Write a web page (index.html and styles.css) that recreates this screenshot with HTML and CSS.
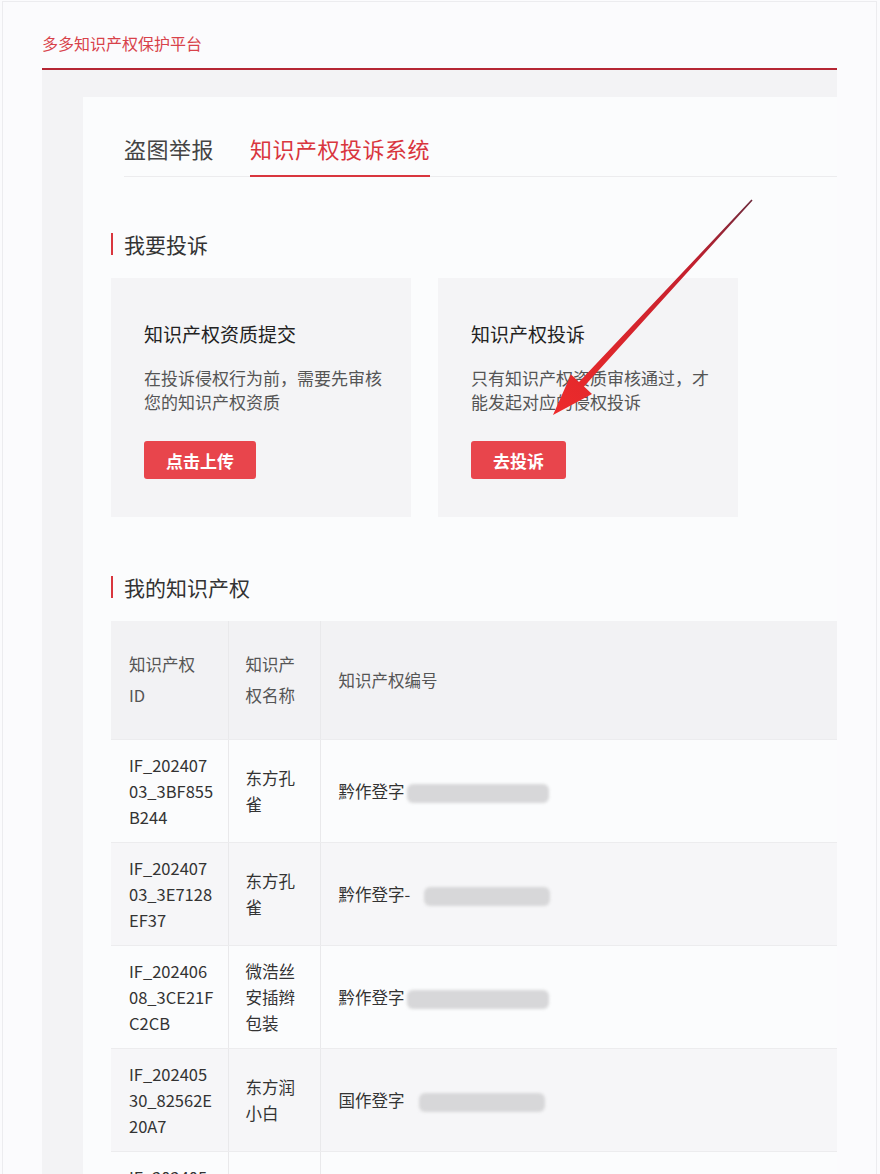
FILE: index.html
```html
<!DOCTYPE html>
<html lang="zh-CN">
<head>
  <meta charset="UTF-8" />
  <meta name="viewport" content="width=device-width, initial-scale=1.0"/>
  <title>多多知识产权保护平台</title>
  <link rel="stylesheet" href="styles.css">
</head>
<body>
  <div class="screen">
    <div class="top">多多知识产权保护平台</div>

    <div class="main">
      <div class="panel">
        <div class="tabs">
          <span class="tab">盗图举报</span>
          <span class="tab active">知识产权投诉系统</span>
        </div>

        <h2 class="sec-title">我要投诉</h2>
        <div class="cards">
          <div class="card">
            <h3>知识产权资质提交</h3>
            <p>在投诉侵权行为前，需要先审核您的知识产权资质</p>
            <button class="btn">点击上传</button>
          </div>
          <div class="card">
            <h3>知识产权投诉</h3>
            <p>只有知识产权资质审核通过，才能发起对应的侵权投诉</p>
            <button class="btn">去投诉</button>
          </div>
        </div>

        <h2 class="sec-title">我的知识产权</h2>
        <table class="ip-table">
          <colgroup>
            <col class="c-id">
            <col class="c-name">
            <col>
          </colgroup>
          <thead>
            <tr>
              <th>知识产权<br>ID</th>
              <th>知识产权名称</th>
              <th>知识产权编号</th>
            </tr>
          </thead>
          <tbody>
            <tr>
              <td>IF_202407<br>03_3BF855<br>B244</td>
              <td>东方孔雀</td>
              <td>黔作登字<span class="mask"></span></td>
            </tr>
            <tr>
              <td>IF_202407<br>03_3E7128<br>EF37</td>
              <td>东方孔雀</td>
              <td>黔作登字-<span class="mask short"></span></td>
            </tr>
            <tr>
              <td>IF_202406<br>08_3CE21F<br>C2CB</td>
              <td>微浩丝安插辫包装</td>
              <td>黔作登字<span class="mask"></span></td>
            </tr>
            <tr>
              <td>IF_202405<br>30_82562E<br>20A7</td>
              <td>东方润小白</td>
              <td>国作登字<span class="mask short"></span></td>
            </tr>
            <tr>
              <td>IF_202405<br>28_1A09C4<br>77D2</td>
              <td>东方孔雀</td>
              <td>黔作登字<span class="mask"></span></td>
            </tr>
          </tbody>
        </table>
      </div>
    </div>
  </div>

  <!-- red pointer drawn over the second card -->
  <svg class="arrow" width="880" height="460" viewBox="0 0 880 460">
    <defs>
      <linearGradient id="arrowGrad" gradientUnits="userSpaceOnUse" x1="752" y1="200" x2="553" y2="415">
        <stop offset="0" stop-color="#6e2a3c"/>
        <stop offset="0.3" stop-color="#c4202e"/>
        <stop offset="1" stop-color="#ee2b2b"/>
      </linearGradient>
    </defs>
    <polygon fill="url(#arrowGrad)" points="751.4,199.6 752.6,200.4 584,386.6 592,394 553,415 571,374.6 579,381.9"/>
  </svg>
</body>
</html>
```

FILE: styles.css
```css
body {
  margin: 0;
  position: relative;
  background-color: #fbfbfd;
  font-family: "Noto Sans CJK SC", "Noto Sans", sans-serif;
  color: #333;
}
.screen {
  margin: 1px 3px 0 2px;
  padding: 0 39px;
  border: 1px solid #ececef;
  border-bottom: none;
}
.top {
  padding: 29px 0 13px;
  line-height: 24px;
  font-size: 16px;
  color: #d8424a;
  border-bottom: 2px solid #b52634;
}
.main {
  background: #f3f3f5;
  padding: 27px 0 0 41px;
}
.panel {
  background: #fbfcfd;
  padding: 0 0 0 28px;
}

.tabs {
  display: flex;
  gap: 36px;
  margin-left: 13px;
  padding-top: 36px;
  border-bottom: 1px solid #ececee;
}
.tab {
  font-size: 22px;
  line-height: 30px;
  padding-bottom: 12px;
  margin-bottom: -1px;
  border-bottom: 2px solid transparent;
  color: #444;
  letter-spacing: 0.5px;
}
.tab.active {
  color: #d9363e;
  border-bottom-color: #d9363e;
}

.sec-title {
  display: flex;
  align-items: center;
  margin: 52px 0 0;
  font-size: 21px;
  font-weight: normal;
  line-height: 30px;
  color: #333;
}
.sec-title::before {
  content: "";
  width: 2px;
  height: 22px;
  margin-right: 11px;
  background: #d9363e;
}
.cards + .sec-title {
  margin-top: 55px;
}

.cards {
  display: flex;
  gap: 27px;
  margin-top: 19px;
}
.card {
  width: 300px;
  box-sizing: border-box;
  background: #f4f4f6;
  padding: 43px 26px 38px 33px;
}
.card h3 {
  margin: 0;
  font-size: 19px;
  font-weight: normal;
  line-height: 26px;
  color: #222;
}
.card p {
  margin: 19px 0 0;
  font-size: 17px;
  line-height: 24px;
  color: #555;
}
.btn {
  display: block;
  margin-top: 27px;
  height: 38px;
  padding: 0 22px;
  border: none;
  border-radius: 3px;
  background: #e8454c;
  color: #fff;
  font-family: inherit;
  font-size: 17px;
  font-weight: bold;
  cursor: pointer;
}

.ip-table {
  width: 100%;
  margin-top: 19px;
  border-collapse: collapse;
  table-layout: fixed;
  font-size: 16.5px;
}
.ip-table .c-id { width: 117px; }
.ip-table .c-name { width: 92px; }
.ip-table th,
.ip-table td {
  text-align: left;
  vertical-align: middle;
  padding: 12px 12px 12px 18px;
  border-bottom: 1px solid #ececee;
  border-right: 1px solid #e9e9eb;
}
.ip-table th:last-child,
.ip-table td:last-child {
  border-right: none;
}
.ip-table th:nth-child(2),
.ip-table td:nth-child(2) {
  padding-left: 17px;
  padding-right: 17px;
}
.ip-table th {
  background: #f2f2f4;
  font-weight: normal;
  line-height: 31px;
  padding-top: 28px;
  padding-bottom: 28px;
  color: #555;
}
.ip-table td {
  line-height: 26px;
  color: #333;
}
.ip-table tbody tr:nth-child(even) td {
  background: #f6f6f8;
}
.mask {
  display: inline-block;
  width: 142px;
  height: 19px;
  margin-left: 2px;
  vertical-align: middle;
  border-radius: 6px;
  background: #d7d7d9;
  filter: blur(1.5px);
}
.mask.short {
  width: 126px;
  margin-left: 14px;
}

.arrow {
  position: absolute;
  left: 0;
  top: 0;
  pointer-events: none;
}
```
